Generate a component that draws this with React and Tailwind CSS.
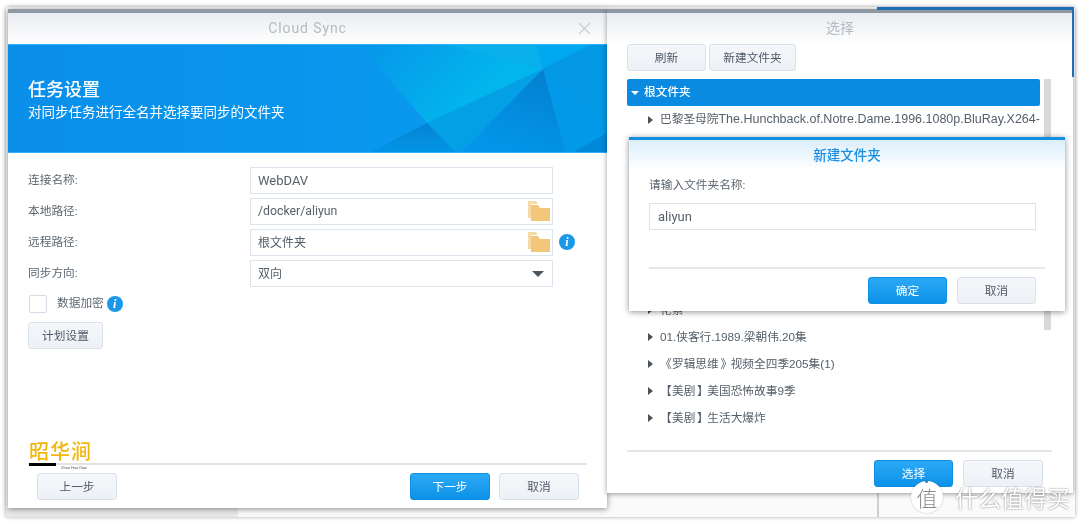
const cjk = 'font-["Roboto","Noto_Sans_CJK_SC",sans-serif]'

function Btn({ primary, className = '', children }) {
  return (
    <div
      className={`flex items-center justify-center h-[27px] pt-[2px] rounded-[3px] border text-[11.7px] ${
        primary
          ? 'border-[#0f8fe3] bg-gradient-to-b from-[#2aa9f5] to-[#0a92e8] text-white'
          : 'border-[#d9e2ea] bg-gradient-to-b from-[#f5f7fa] to-[#edf1f6] text-[#4f5a66]'
      } ${className}`}
    >
      {children}
    </div>
  )
}

function FolderIcon() {
  return (
    <svg width="22" height="20" viewBox="0 0 22 20" className="shrink-0 -translate-y-[1px]">
      <path d="M0 0h8l2 3h-7v14h-3z" fill="#f6d9a6" />
      <path d="M3 4h7l2 3h10v13h-19z" fill="#f3c77a" />
    </svg>
  )
}

function InfoIcon({ className = '' }) {
  return (
    <div className={`flex items-center justify-center w-4 h-4 rounded-full bg-[#1b97ea] text-white text-[12px] font-bold italic font-["Liberation_Serif",serif] leading-none ${className}`}>
      i
    </div>
  )
}

function Field({ label, children, className = '' }) {
  return (
    <div className="flex items-center h-[27px]">
      <div className="w-[222px] text-[11.7px] text-[#5c6670]">{label}:</div>
      <div className={`flex items-center w-[303px] h-[27px] border border-[#dbe3ec] bg-white pl-[7px] pr-[2px] text-[13px] text-[#555f69] ${className}`}>
        {children}
      </div>
    </div>
  )
}

function TreeRow({ children }) {
  return (
    <div className="flex items-center h-[27px] pl-[21px] text-[11.7px] text-[#555f69] font-['Liberation_Sans','Noto_Sans_CJK_SC',sans-serif] whitespace-pre">
      <span className="w-0 h-0 mr-[7px] shrink-0 border-y-[4px] border-y-transparent border-l-[5px] border-l-[#4a525a]" />
      <span>{children}</span>
    </div>
  )
}

function Banner() {
  return (
    <div className="relative h-[109px] bg-gradient-to-r from-[#0a8fea] to-[#0a9cf0] border-y border-[#2fb0f5] overflow-hidden">
      <svg className="absolute inset-0" width="599" height="109" viewBox="0 0 599 109">
        <defs>
          <linearGradient id="mid" x1="352" y1="0" x2="440" y2="85" gradientUnits="userSpaceOnUse">
            <stop offset="0" stopColor="#0795ea" />
            <stop offset="1" stopColor="#02b6ec" />
          </linearGradient>
          <linearGradient id="dark" x1="535" y1="24" x2="505" y2="109" gradientUnits="userSpaceOnUse">
            <stop offset="0" stopColor="#0480d0" />
            <stop offset="1" stopColor="#0296e8" />
          </linearGradient>
          <linearGradient id="low" x1="419" y1="78" x2="419" y2="109" gradientUnits="userSpaceOnUse">
            <stop offset="0" stopColor="#0583d4" />
            <stop offset="1" stopColor="#0296e6" />
          </linearGradient>
        </defs>
        <polygon points="352,0 442,0 535,24 419,78" fill="url(#mid)" />
        <polygon points="442,0 529,0 535,24" fill="#0ab0ec" />
        <polygon points="529,0 582,0 535,24" fill="#00a8f0" />
        <polygon points="582,0 599,0 599,83 535,24" fill="#0298e4" />
        <polygon points="535,24 599,83 599,88 562,109 558,109" fill="#029ae8" />
        <polygon points="535,24 452,109 558,109" fill="url(#dark)" />
        <polygon points="419,78 535,24 449,109" fill="#04a0e6" />
        <polygon points="419,78 359,109 449,109" fill="url(#low)" />
        <polygon points="599,88 562,109 599,109" fill="#0288d8" />
      </svg>
      <div className="relative pl-5 pt-[33px] text-white">
        <div className="text-[18px] leading-[24px] font-medium">任务设置</div>
        <div className="text-[13.5px] leading-[20px]">对同步任务进行全名并选择要同步的文件夹</div>
      </div>
    </div>
  )
}

function CloudSyncWindow() {
  return (
    <div className="absolute left-2 top-[9px] w-[599px] h-[499px] flex flex-col bg-white border-t-[4px] border-[#8f98a3] shadow-[0_1px_6px_rgba(0,0,0,0.45)]">
      <div className="relative flex items-center justify-center h-[31px] bg-gradient-to-b from-[#e9ecf1] to-white text-[14px] text-[#b5bbc2] tracking-[0.9px]">
        Cloud Sync
        <svg className="absolute right-4 top-[9px]" width="13" height="13" viewBox="0 0 13 13">
          <path d="M1 1l11 11M12 1l-11 11" stroke="#c9ced4" strokeWidth="1.2" fill="none" />
        </svg>
      </div>
      <Banner />
      <div className="flex flex-col flex-1 px-5 pt-[14px]">
        <div className="flex flex-col gap-1">
          <Field label="连接名称">WebDAV</Field>
          <Field label="本地路径">
            <span className="flex-1 text-[12.3px]">/docker/aliyun</span>
            <FolderIcon />
          </Field>
          <div className="relative">
            <Field label="远程路径">
              <span className="flex-1 text-[12px]">根文件夹</span>
              <FolderIcon />
            </Field>
            <InfoIcon className="absolute left-[531px] top-[5px]" />
          </div>
          <Field label="同步方向">
            <span className="flex-1 text-[12px]">双向</span>
            <span className="w-0 h-0 mr-[6px] border-x-[6px] border-x-transparent border-t-[6px] border-t-[#4d565f]" />
          </Field>
        </div>
        <div className="flex items-center h-[18px] mt-2 pl-[1px]">
          <div className="w-[18px] h-[18px] border border-[#d5dde6] bg-white rounded-[2px]" />
          <span className="ml-[10px] text-[11.7px] text-[#5c6670]">数据加密</span>
          <InfoIcon className="ml-[3px]" />
        </div>
        <Btn className="w-[75px] mt-[9px]">计划设置</Btn>
        <div className="mt-auto">
          <div className="h-5 leading-5 pl-[1px] translate-y-[2px] text-[20px] font-medium text-[#f2b60c] tracking-[1px]">昭华涧</div>
          <div className="relative h-[2px] mt-[3px] mb-2 bg-[#e4e4e4]">
            <div className="absolute left-[1px] top-0 w-[27px] h-[3px] bg-black" />
            <div className="absolute left-[33px] top-[2px] text-[4px] leading-[5px] text-[#666] whitespace-nowrap">Zhao Hua Dian</div>
          </div>
          <div className="flex items-center h-[27px] pl-[9px] pr-[8px] mb-2 gap-[9px]">
            <Btn className="w-20 mr-auto">上一步</Btn>
            <Btn primary className="w-20">下一步</Btn>
            <Btn className="w-20">取消</Btn>
          </div>
        </div>
      </div>
    </div>
  )
}

function SelectWindow() {
  return (
    <div className="absolute left-[607px] top-[9px] w-[466px] h-[484px] flex flex-col bg-white border-t-[4px] border-[#8f98a3] shadow-[0_1px_5px_rgba(0,0,0,0.4)]">
      <div className="flex items-center justify-center h-[31px] shrink-0 bg-gradient-to-b from-[#e9ecf1] to-white text-[14px] text-[#b5bbc2]">选择</div>
      <div className="flex flex-col flex-1 px-5">
        <div className="flex gap-[3px]">
          <Btn className="w-[79px]">刷新</Btn>
          <Btn className="w-[87px]">新建文件夹</Btn>
        </div>
        <div className="flex gap-1 h-[371px] mt-2">
          <div className="w-[415px]">
            <div className="flex items-center w-[413px] h-[27px] pt-px pl-[4px] rounded-[2px] bg-[#0a8ae0] text-[11.7px] font-medium text-white">
              <span className="w-0 h-0 mr-[5px] border-x-[4px] border-x-transparent border-t-[4px] border-t-white" />
              根文件夹
            </div>
            <TreeRow>巴黎圣母院<span className="text-[12.5px]">The.Hunchback.of.Notre.Dame.1996.1080p.BluRay.X264-</span></TreeRow>
            <div className="h-[163px]" />
            <TreeRow>花絮</TreeRow>
            <TreeRow>01.侠客行.1989.梁朝伟.20集</TreeRow>
            <TreeRow><span className="tracking-[-1.5px]">《 </span>罗辑思维<span className="tracking-[-1.5px]"> 》</span>视频全四季205集(1)</TreeRow>
            <TreeRow><span className="tracking-[-1.5px]">【 </span>美剧<span className="tracking-[-1.5px]"> 】</span>美国恐怖故事9季</TreeRow>
            <TreeRow><span className="tracking-[-1.5px]">【 </span>美剧<span className="tracking-[-1.5px]"> 】</span>生活大爆炸</TreeRow>
          </div>
          <div className="w-[7px] h-[251px] -ml-[2px] bg-[#d9d9d9]" />
        </div>
        <div className="w-[425px] h-[2px] bg-[#e6e6e6]" />
        <div className="flex justify-end gap-[10px] w-[416px] mt-2">
          <Btn primary className="w-[79px]">选择</Btn>
          <Btn className="w-[80px]">取消</Btn>
        </div>
      </div>
    </div>
  )
}

function NewFolderDialog() {
  return (
    <div className="absolute left-[629px] top-[137px] w-[436px] h-[174px] flex flex-col bg-white border-t-[3px] border-[#0f8fe3] shadow-[0_1px_6px_rgba(0,0,0,0.45)]">
      <div className="flex items-center justify-center h-[30px] shrink-0 bg-gradient-to-b from-[#dbeefb] to-white text-[13.5px] font-medium text-[#1a8fe3]">新建文件夹</div>
      <div className="flex flex-col flex-1 px-5">
        <div className="mt-[5px] text-[11.7px] leading-[20px] text-[#5c6670]">请输入文件夹名称:</div>
        <div className="flex items-center w-[387px] h-[27px] mt-[8px] pl-2 border border-[#dbe3ec] text-[13px] text-[#555f69]">aliyun</div>
        <div className="w-[396px] h-[2px] mt-[37px] bg-[#e6e6e6]" />
        <div className="flex justify-end gap-[10px] w-[387px] mt-2">
          <Btn primary className="w-[79px]">确定</Btn>
          <Btn className="w-[79px]">取消</Btn>
        </div>
      </div>
    </div>
  )
}

function Watermark() {
  return (
    <div className="absolute left-[911px] top-[481px] flex items-center text-white font-['Noto_Sans_CJK_SC',sans-serif]">
      <div className="relative flex items-center justify-center w-[32px] h-[32px] rounded-full bg-white text-[#8b8b8b] text-[21px] font-light leading-none shadow-[0_0_2px_rgba(0,0,0,0.25)]">
        值
        <span className="absolute left-[14px] top-[-1px] w-[3px] h-[3px] rounded-full bg-[#2a7fc8]" />
      </div>
      <div className="ml-[12px] text-[23px] leading-[30px] whitespace-nowrap [text-shadow:0_0_2px_rgba(0,0,0,0.55)]">什么值得买</div>
    </div>
  )
}

export default function App() {
  return (
    <div className={`relative w-[1080px] h-[523px] overflow-hidden bg-white blur-[0.5px] ${cjk}`}>
      {/* window behind the two dialogs */}
      <div className="absolute left-[6px] top-[7px] w-[1069px] h-[510px] bg-[#fafafa] shadow-[0_0_4px_rgba(0,0,0,0.35)]">
        <div className="absolute left-0 bottom-0 w-[232px] h-[9px] bg-[#e9e9e9]" />
        <div className="absolute left-[871px] bottom-0 w-[2px] h-[24px] bg-[#cfcfcf]" />
      </div>
      <CloudSyncWindow />
      <SelectWindow />
      <div className="absolute left-[877px] top-[7px] w-[197px] h-[3px] bg-[#1a6fb5]" />
      <div className="absolute left-[1072px] top-[7px] w-[2px] h-[70px] bg-[#1a6fb5]" />
      <NewFolderDialog />
      <Watermark />
    </div>
  )
}
